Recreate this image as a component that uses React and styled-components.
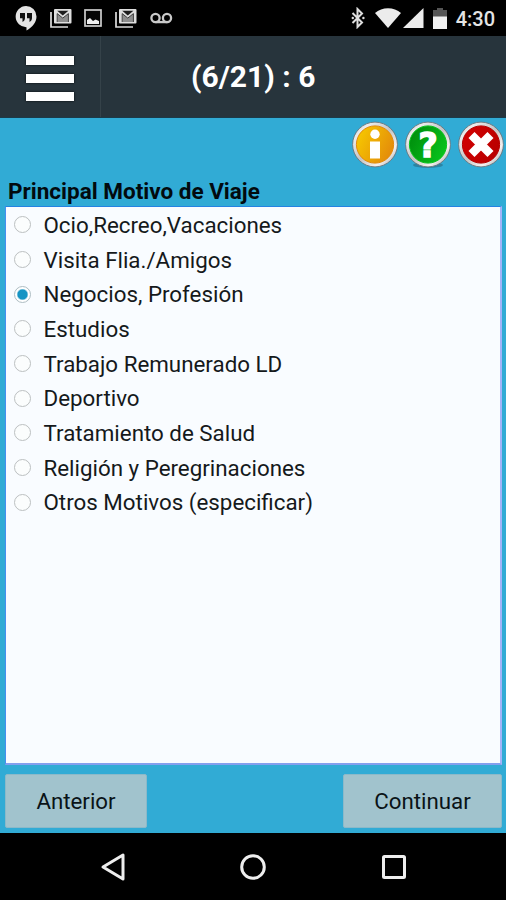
import React, { useState } from 'react';
import styled, { createGlobalStyle } from 'styled-components';

const GlobalStyle = createGlobalStyle`
  body {
    margin: 0;
    background: #000;
    font-family: Roboto, "Liberation Sans", sans-serif;
  }
`;

const Screen = styled.div`
  width: 506px;
  height: 900px;
  display: flex;
  flex-direction: column;
  overflow: hidden;
  background: #31abd5;
`;

const StatusBar = styled.div`
  height: 36px;
  flex: none;
  display: flex;
  align-items: center;
  justify-content: space-between;
  box-sizing: border-box;
  padding: 0 11px 0 15px;
  background: #000;
`;

const StatusGroup = styled.div`
  display: flex;
  align-items: center;
  gap: ${({ $gap }) => $gap}px;

  svg {
    display: block;
  }
`;

const Clock = styled.span`
  margin-left: 9px;
  color: #e4e4e4;
  font-size: 20px;
  font-weight: 500;
  line-height: 36px;
  padding-top: 2px;
`;

const Header = styled.header`
  height: 82px;
  flex: none;
  display: flex;
  box-sizing: border-box;
  background: #27343c;
  border-bottom: 1px solid #1b3a49;
`;

const MenuButton = styled.button`
  width: 101px;
  display: flex;
  flex-direction: column;
  align-items: center;
  justify-content: center;
  gap: 9px;
  padding: 4px 0 0;
  border: 0;
  border-right: 1px solid #354249;
  background: none;
`;

const MenuLine = styled.span`
  width: 48px;
  height: 8.8px;
  background: #fff;
  box-shadow: 0 0 2px #05090c;
`;

const HeaderTitle = styled.h1`
  flex: 1;
  margin: 0 0 0 90px;
  color: #fff;
  font-size: 30px;
  font-weight: 700;
  line-height: 82px;
  white-space: nowrap;
`;

const Toolbar = styled.div`
  height: 54px;
  flex: none;
  display: flex;
  justify-content: flex-end;
  gap: 5px;
  padding: 3px 1px 0 0;
`;

const RoundButton = styled.button`
  width: 48px;
  height: 48px;
  padding: 0;
  border: 0;
  background: none;

  svg {
    display: block;
  }
`;

const Question = styled.h2`
  height: 31px;
  flex: none;
  margin: 0 8px;
  color: #020a0e;
  font-size: 22.5px;
  font-weight: 700;
  line-height: 32px;
  white-space: nowrap;
`;

const OptionList = styled.div`
  height: 559px;
  flex: none;
  box-sizing: border-box;
  margin: 0 4px 0 5px;
  padding: 0 8px;
  border: 1px solid #468ff0;
  border-top-color: #2583e2;
  border-right: 2px solid #a3b4f8;
  border-bottom: 2px solid #849fee;
  background: #f9fcff;
`;

const Option = styled.label`
  height: 34.7px;
  display: flex;
  align-items: center;
`;

const Radio = styled.input`
  appearance: none;
  box-sizing: border-box;
  width: 17px;
  height: 17px;
  flex: none;
  margin: 1px 12.5px 0 0;
  border: 1px solid #bcc0c1;
  border-radius: 50%;
  background: #fbfdfd;

  &:checked {
    border-color: #aebdc3;
    background: radial-gradient(circle, #1594c4 0 4.5px, #fff 6px);
  }
`;

const OptionText = styled.span`
  padding-top: 1px;
  color: #15191b;
  font-size: 22.35px;
  line-height: 34px;
  white-space: nowrap;
`;

const Actions = styled.div`
  height: 68px;
  flex: none;
  box-sizing: border-box;
  display: flex;
  justify-content: space-between;
  padding: 9px 4px 5px 5px;
`;

const ActionButton = styled.button`
  width: ${({ $width }) => $width}px;
  height: 54px;
  padding: 0 0 1px;
  border: 1px solid #8bb9c9;
  border-radius: 2px;
  background: #a1c3cd;
  color: #0a1317;
  font-family: inherit;
  font-size: 22.3px;
`;

const NavBar = styled.nav`
  height: 67px;
  flex: none;
  display: flex;
  align-items: center;
  justify-content: center;
  gap: 112.5px;
  background: #000;

  svg {
    display: block;
  }
`;

const options = [
  'Ocio,Recreo,Vacaciones',
  'Visita Flia./Amigos',
  'Negocios, Profesión',
  'Estudios',
  'Trabajo Remunerado LD',
  'Deportivo',
  'Tratamiento de Salud',
  'Religión y Peregrinaciones',
  'Otros Motivos (especificar)',
];

const HangoutsIcon = () => (
  <svg width="22" height="25" viewBox="0 0 22 25">
    <path d="M11 0a10.5 10.5 0 0 1 10.5 10.5c0 6-4.3 10.8-10 14v-3.3A10.5 10.5 0 1 1 11 0z" fill="#e4e4e4" />
    <path d="M5 7h5v5c0 2-1 3.3-2.5 4v-3.8H5zM12 7h5v5c0 2-1 3.3-2.5 4v-3.8H12z" fill="#111" />
  </svg>
);

const GmailIcon = () => (
  <svg width="22" height="19" viewBox="0 0 22 19">
    <path d="M1 3v15h17" fill="none" stroke="#dcdcdc" strokeWidth="1.7" />
    <rect x="4" y="0" width="17.5" height="14.5" rx="1" fill="#dedede" />
    <path d="M7.2 1.8h11.2l-5.6 4.6z" fill="#1c1c1c" />
    <path d="M7.6 13V5l5.2 4.3L18 5v8z" fill="#8d8d8d" />
    <path d="M7.2 13V4.6l5.6 4.5 5.6-4.5V13" fill="none" stroke="#3a3a3a" />
  </svg>
);

const PictureIcon = () => (
  <svg width="18" height="18" viewBox="0 0 18 18">
    <rect x="1" y="1" width="16" height="16" fill="#060606" stroke="#cecece" strokeWidth="1.7" />
    <path d="M3 15v-4l3-2 3 3 2.5-1.5L15 12v3z" fill="#f0f0f0" />
  </svg>
);

const VoicemailIcon = () => (
  <svg width="23" height="12" viewBox="0 0 23 12" fill="none" stroke="#c9c9c9" strokeWidth="2.3">
    <circle cx="5.5" cy="6" r="4.1" />
    <circle cx="17" cy="6" r="4.1" />
    <path d="M5.5 10.1h12" />
  </svg>
);

const BluetoothIcon = () => (
  <svg width="15" height="22" viewBox="0 0 15 22">
    <path d="M1.5 6l9.5 9.5L6.5 20V2L11 6.5 1.5 16" fill="none" stroke="#dedede" strokeWidth="2" />
    <circle cx="1.8" cy="11" r="1.2" fill="#dedede" />
    <circle cx="12.4" cy="11" r="1.2" fill="#dedede" />
  </svg>
);

const WifiIcon = () => (
  <svg width="26" height="20" viewBox="0 0 26 20">
    <path d="M0 5C7-1.3 19-1.3 26 5L13 20z" fill="#ececec" />
  </svg>
);

const SignalIcon = () => (
  <svg width="21" height="20" viewBox="0 0 21 20">
    <path d="M20.5 0v20H0z" fill="#ececec" />
  </svg>
);

const BatteryIcon = () => (
  <svg width="14" height="21" viewBox="0 0 14 21">
    <path d="M0 2h4V0h6v2h4v7H0z" fill="#555" />
    <path d="M0 8.5h14V21H0z" fill="#f0f0f0" />
  </svg>
);

const Badge = ({ id, light, dark, shadow, children }) => (
  <svg width="48" height="48" viewBox="0 0 48 48">
    <defs>
      <linearGradient id={`${id}-ring`} x1="0" y1="0" x2="1" y2="1">
        <stop offset="0" stopColor="#b4bcc0" />
        <stop offset="0.2" stopColor="#ececec" />
        <stop offset="0.5" stopColor="#c4c4c4" />
        <stop offset="0.75" stopColor="#f5f1f0" />
        <stop offset="1" stopColor="#8e9599" />
      </linearGradient>
      <linearGradient id={`${id}-fill`} x1="0" y1="0.2" x2="1" y2="0.7">
        <stop offset="0" stopColor={light} />
        <stop offset="1" stopColor={dark} />
      </linearGradient>
    </defs>
    {shadow && <ellipse cx="24" cy="44" rx="15" ry="3" fill="#276b84" opacity="0.6" />}
    <circle cx="24" cy="23.5" r="22.4" fill={`url(#${id}-ring)`} stroke="#69757c" strokeWidth="0.9" />
    <circle cx="24" cy="23.5" r="18.6" fill={`url(#${id}-fill)`} stroke={dark} strokeWidth="1" />
    {children}
  </svg>
);

const InfoIcon = () => (
  <Badge id="info" light="#f7c900" dark="#e38a0b">
    <circle cx="24" cy="13.3" r="4.7" fill="#fff" />
    <rect x="19" y="20.5" width="10" height="17" fill="#fff" />
  </Badge>
);

const HelpIcon = () => (
  <Badge id="help" light="#008c0c" dark="#08c41c" shadow>
    <text
      x="24"
      y="36"
      textAnchor="middle"
      fontFamily="DejaVu Sans, sans-serif"
      fontSize="33"
      fontWeight="700"
      fill="#fff"
      stroke="#fff"
      strokeWidth="1.5"
    >
      ?
    </text>
  </Badge>
);

const CloseIcon = () => (
  <Badge id="close" light="#d20000" dark="#b80000">
    <path d="M14.5 14l19 19M33.5 14l-19 19" stroke="#fff" strokeWidth="8.5" />
  </Badge>
);

const App = () => {
  const [selected, setSelected] = useState(2);

  return (
    <>
      <GlobalStyle />
      <Screen>
        <StatusBar>
          <StatusGroup $gap={12.7}>
            <HangoutsIcon />
            <GmailIcon />
            <PictureIcon />
            <GmailIcon />
            <VoicemailIcon />
          </StatusGroup>
          <StatusGroup $gap={0}>
            <StatusGroup $gap={9}>
              <BluetoothIcon />
              <StatusGroup $gap={2}>
                <WifiIcon />
                <SignalIcon />
              </StatusGroup>
              <BatteryIcon />
            </StatusGroup>
            <Clock>4:30</Clock>
          </StatusGroup>
        </StatusBar>

        <Header>
          <MenuButton aria-label="Menú">
            <MenuLine />
            <MenuLine />
            <MenuLine />
          </MenuButton>
          <HeaderTitle>(6/21) : 6</HeaderTitle>
        </Header>

        <Toolbar>
          <RoundButton>
            <InfoIcon />
          </RoundButton>
          <RoundButton>
            <HelpIcon />
          </RoundButton>
          <RoundButton>
            <CloseIcon />
          </RoundButton>
        </Toolbar>

        <Question>Principal Motivo de Viaje</Question>
        <OptionList>
          {options.map((option, index) => (
            <Option key={option}>
              <Radio
                type="radio"
                name="motivo"
                checked={selected === index}
                onChange={() => setSelected(index)}
              />
              <OptionText>{option}</OptionText>
            </Option>
          ))}
        </OptionList>

        <Actions>
          <ActionButton $width={142}>Anterior</ActionButton>
          <ActionButton $width={159}>Continuar</ActionButton>
        </Actions>

        <NavBar>
          <svg width="28" height="30" viewBox="0 0 28 30">
            <path d="M24 3v24L4 15z" fill="none" stroke="#eee" strokeWidth="3" strokeLinejoin="round" />
          </svg>
          <svg width="28" height="28" viewBox="0 0 28 28">
            <circle cx="14" cy="14" r="11.3" fill="none" stroke="#eee" strokeWidth="3" />
          </svg>
          <svg width="28" height="28" viewBox="0 0 28 28">
            <rect x="3.5" y="3.5" width="21" height="21" rx="1" fill="none" stroke="#eee" strokeWidth="3" />
          </svg>
        </NavBar>
      </Screen>
    </>
  );
};

export default App;
